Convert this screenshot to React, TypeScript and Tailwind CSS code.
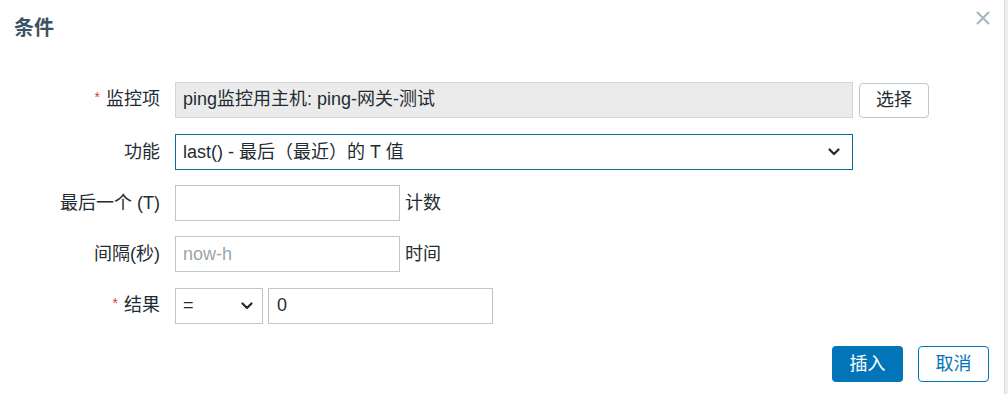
import React from "react";

const font = { fontFamily: '"Liberation Sans", "Noto Sans CJK SC", sans-serif' };

function Chevron({ className }: { className?: string }) {
  return (
    <svg className={className} width="12" height="8" viewBox="0 0 12 8" fill="none">
      <path d="M1.5 1.5 L6 6 L10.5 1.5" stroke="#1f2c33" strokeWidth="2.2" strokeLinecap="round" strokeLinejoin="round" />
    </svg>
  );
}

function Label({ text, required }: { text: string; required?: boolean }) {
  return (
    <div className="w-[161px] shrink-0 pr-[1px] text-right text-[18px] leading-[36px] text-[#1f2c33] whitespace-nowrap">
      {required && <span className="mr-[6px] text-[14px] relative top-[-3px] text-[#e33734]">*</span>}
      {text}
    </div>
  );
}

export default function App() {
  return (
    <div className="flex w-[1008px] h-[394px] bg-white overflow-hidden" style={font}>
      <div className="relative flex-1 flex flex-col">
        <div className="flex items-start justify-between pl-[14px] pr-[13px] pt-[14px]">
          <h2 className="text-[20px] leading-[28px] font-bold text-[#3a5261]">条件</h2>
          <svg className="mt-[-4px]" width="16" height="16" viewBox="0 0 16 16" fill="none">
            <path d="M2 2 L14 14 M14 2 L2 14" stroke="#a9b7bf" strokeWidth="2.2" />
          </svg>
        </div>

        <div className="mt-[39px] flex flex-col gap-[15px]">
          <div className="flex items-center mb-[1px]">
            <Label text="监控项" required />
            <div className="ml-[14px] w-[678px] h-[36px] flex items-center px-[7px] bg-[#ebebeb] border border-[#d3d8db] text-[18px] text-[#1f2c33] whitespace-nowrap">
              ping监控用主机: ping-网关-测试
            </div>
            <button className="ml-[6px] mt-[1px] w-[70px] h-[35px] bg-white border border-[#bcc6cb] rounded-[4px] text-[18px] text-[#1f2c33]">
              选择
            </button>
          </div>

          <div className="flex items-center">
            <Label text="功能" />
            <div className="ml-[14px] w-[678px] h-[36px] flex items-center justify-between px-[7px] pr-[12px] bg-white border border-[#0a6aa1] text-[18px] text-[#1f2c33] whitespace-nowrap">
              <span>last() - 最后（最近）的 T 值</span>
              <Chevron />
            </div>
          </div>

          <div className="flex items-center">
            <Label text="最后一个 (T)" />
            <div className="ml-[14px] w-[225px] h-[36px] bg-white border border-[#bcc6cb]" />
            <span className="ml-[5px] text-[18px] text-[#1f2c33]">计数</span>
          </div>

          <div className="flex items-center">
            <Label text="间隔(秒)" />
            <div className="ml-[14px] w-[225px] h-[36px] flex items-center px-[7px] bg-white border border-[#bcc6cb] text-[18px] text-[#9aa5ab]">
              now-h
            </div>
            <span className="ml-[5px] text-[18px] text-[#1f2c33]">时间</span>
          </div>

          <div className="flex items-center">
            <Label text="结果" required />
            <div className="ml-[14px] w-[88px] h-[36px] flex items-center justify-between px-[7px] pr-[9px] bg-white border border-[#bcc6cb] text-[18px] text-[#1f2c33]">
              <span>=</span>
              <Chevron />
            </div>
            <div className="ml-[5px] w-[225px] h-[36px] flex items-center px-[8px] bg-white border border-[#bcc6cb] text-[18px] text-[#1f2c33]">
              0
            </div>
          </div>
        </div>

        <div className="mt-[22px] flex justify-end gap-[15px] pr-[15px]">
          <button className="w-[71px] h-[36px] rounded-[4px] bg-[#0275b8] text-white text-[18px]">插入</button>
          <button className="w-[71px] h-[36px] rounded-[4px] bg-white border border-[#0275b8] text-[#0275b8] text-[18px]">取消</button>
        </div>
      </div>
      <div className="w-[4px] h-full border-l border-[#d5dbde] bg-[#eceff1]" />
    </div>
  );
}
